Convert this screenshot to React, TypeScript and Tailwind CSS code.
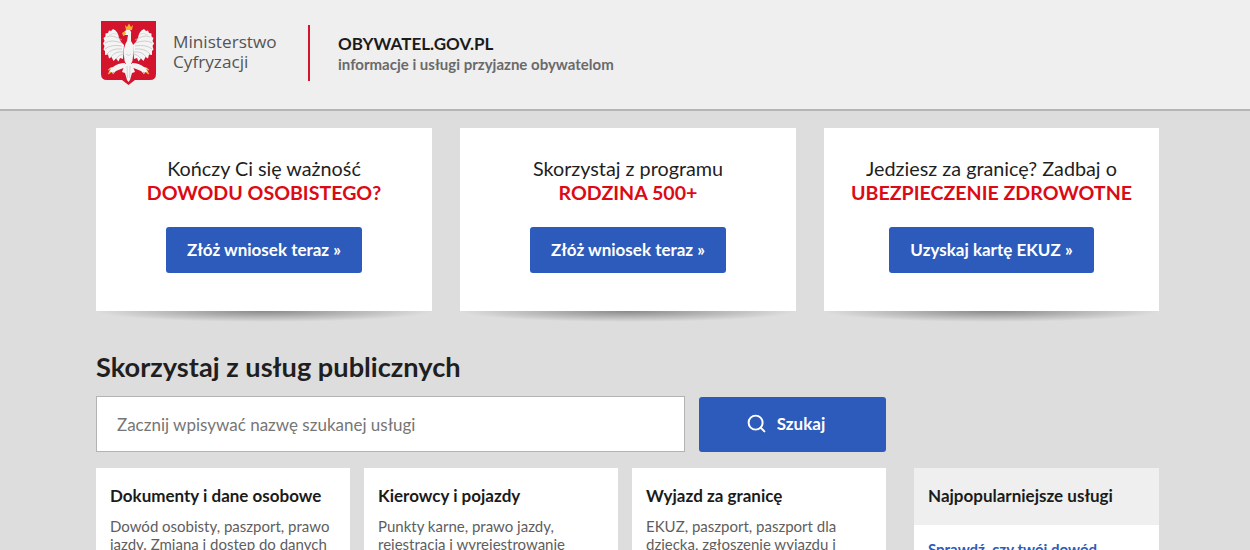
import { Search } from "lucide-react";

const promos = [
  { line: "Kończy Ci się ważność", red: "DOWODU OSOBISTEGO?", cta: "Złóż wniosek teraz »" },
  { line: "Skorzystaj z programu", red: "RODZINA 500+", cta: "Złóż wniosek teraz »" },
  { line: "Jedziesz za granicę? Zadbaj o", red: "UBEZPIECZENIE ZDROWOTNE", cta: "Uzyskaj kartę EKUZ »" },
];

const services = [
  { title: "Dokumenty i dane osobowe", text: "Dowód osobisty, paszport, prawo jazdy. Zmiana i dostęp do danych" },
  { title: "Kierowcy i pojazdy", text: "Punkty karne, prawo jazdy, rejestracja i wyrejestrowanie" },
  { title: "Wyjazd za granicę", text: "EKUZ, paszport, paszport dla dziecka, zgłoszenie wyjazdu i" },
];

// one wing, drawn for the left side and mirrored for the right
function Wing() {
  const feathers = [
    "M21 20Q11 14 6 17",
    "M21 23Q10 19 4 23",
    "M21 26Q10 24 4 29",
    "M21 29Q11 28 6 34",
    "M22 32Q14 31 10 37",
    "M23 34Q18 34 15 39",
  ];
  return (
    <g>
      <path
        d="M23 25Q20 23 18 18Q17 11 12 9L10 11L8 10.5L7 13L4.500 13.500L4.500 16.500L2.500 18L3.500 21L2 23.500L3.500 26L2.500 29.500L4 31L4 35L7 34.500L8 38.500L10.500 37L12.500 41L15 38.500L17.500 41.500L19 38L22 39Z"
        fill="#f4f4f4"
      />
      {feathers.map((d) => (
        <path key={d} d={d} fill="none" stroke="#bdbdbd" strokeWidth="0.7" />
      ))}
      <path d="M17 14Q12 12.500 8 15" fill="none" stroke="#cfcfcf" strokeWidth="0.6" />
      {/* leg and talons */}
      <path d="M24 43Q17 43 12 47Q9 47 7 50L9 50L7 54L11 52L12 54L15 51Q20 49 25 47Z" fill="#f4f4f4" />
      <path d="M7 50L10 49M7 54L10 52M12 54L13 52" stroke="#e3a82e" strokeWidth="1.2" />
    </g>
  );
}

// Godło — eagle on the red shield
function Emblem() {
  return (
    <svg viewBox="0 0 56 66" className="h-[66px] w-[56px] shrink-0">
      <path d="M0 1H55V54Q55 60 49 60H34L27.500 65L21 60H6Q0 60 0 54Z" fill="#d4132d" />
      <Wing />
      <g transform="translate(55 0) scale(-1 1)">
        <Wing />
      </g>
      {/* neck and body */}
      <path
        d="M24 11Q26 9 29 10Q31 12 30 15L30 21Q34 26 32 36Q32 41 30 44H25Q23 41 23 36Q22 27 26 21L27 15L24 15L22 16Z"
        fill="#f4f4f4"
      />
      {/* tail */}
      <path d="M24 44H31L34 52L31 53L29 60L27.500 62L26 60L24 53L21 52Z" fill="#f4f4f4" />
      <path d="M26 46L26.500 58M29 46L28.500 58M25 34Q27.500 37 30 34" fill="none" stroke="#bdbdbd" strokeWidth="0.6" />
      {/* crown and beak */}
      <path d="M24 5L26 7L28 3.500L30 7L32 5L31 10H25Z" fill="#f0b429" />
      <path d="M24 11L21 13L22 15.500L25 14Z" fill="#f0b429" />
    </svg>
  );
}

function PromoCard({ line, red, cta }: { line: string; red: string; cta: string }) {
  return (
    <div className="relative h-[183px]">
      {/* soft shadow under the card */}
      <div className="absolute inset-x-0 top-full h-[11px] bg-[radial-gradient(ellipse_50%_100%_at_50%_0%,rgba(0,0,0,0.38),rgba(0,0,0,0)_100%)]" />
      <div className="relative flex h-full flex-col items-center bg-white pt-[28px]">
        <p className="text-[19.8px] leading-[24px] text-[#1f1f1f]">{line}</p>
        <p className="mt-[1px] text-[19.6px] font-bold leading-[24px] text-[#dc0a14]">{red}</p>
        <button className="mt-[22px] h-[46px] rounded-[3px] bg-[#2c5bbb] px-[21px] text-[17px] font-bold text-white">
          {cta}
        </button>
      </div>
    </div>
  );
}

function ServiceCard({ title, text }: { title: string; text: string }) {
  return (
    <div className="h-[200px] bg-white px-[14px] pt-[16px]">
      <h3 className="text-[17px] font-bold leading-[24px] text-[#1b1b1b]">{title}</h3>
      <p className="mt-[9px] text-[15px] leading-[18px] text-[#5e5e5e]">{text}</p>
    </div>
  );
}

export default function App() {
  return (
    <div className="h-[550px] overflow-hidden bg-[#dddddd] font-['Lato',sans-serif]">
      <header className="h-[111px] border-b-2 border-[#b5b5b5] bg-[#efefef] pl-[101px] pt-[20px]">
        <div className="flex items-start">
          <Emblem />
          <div className="ml-[16px] mt-[12px] w-[135px] font-['Open_Sans',sans-serif] text-[17.2px] leading-[20px] text-[#555555]">
            <div>Ministerstwo</div>
            <div>Cyfryzacji</div>
          </div>
          <div className="mt-[5px] h-[56px] w-[2px] bg-[#d4132d]" />
          <div className="ml-[28px] mt-[14px]">
            <div className="text-[17px] font-bold leading-[20px] text-[#1b1b1b]">OBYWATEL.GOV.PL</div>
            <div className="text-[15px] font-bold leading-[20px] text-[#6a6a6a]">
              informacje i usługi przyjazne obywatelom
            </div>
          </div>
        </div>
      </header>

      <main className="pl-[96px] pt-[17px]">
        <div className="grid w-[1063px] grid-cols-[336px_336px_335px] gap-[28px]">
          {promos.map((p) => (
            <PromoCard key={p.red} {...p} />
          ))}
        </div>

        <h2 className="mt-[37px] text-[27.2px] font-bold leading-[38px] text-[#1f1f1f]">Skorzystaj z usług publicznych</h2>

        <div className="mt-[10px] flex gap-[14px]">
          <div className="flex h-[56px] w-[589px] items-center border border-[#b3b3b3] bg-white px-[20px] pt-[2px] text-[17px] text-[#767676]">
            Zacznij wpisywać nazwę szukanej usługi
          </div>
          <button className="mt-[1px] flex h-[55px] w-[187px] items-center justify-center gap-[10px] rounded-[3px] bg-[#2c5bbb] pb-[2px] pr-[14px] text-[17px] font-bold text-white">
            <Search size={21} strokeWidth={2.25} />
            Szukaj
          </button>
        </div>

        <div className="mt-[16px] flex">
          <div className="grid w-[790px] grid-cols-3 gap-[14px]">
            {services.map((s) => (
              <ServiceCard key={s.title} {...s} />
            ))}
          </div>
          <aside className="ml-[28px] w-[245px] bg-white">
            <div className="h-[57px] bg-[#efefef] px-[14px] pt-[16px] text-[17px] font-bold leading-[24px] text-[#1b1b1b]">
              Najpopularniejsze usługi
            </div>
            <a className="mt-[14px] block px-[14px] text-[15px] font-bold leading-[20px] text-[#2c5bbb]">
              Sprawdź, czy twój dowód
            </a>
          </aside>
        </div>
      </main>
    </div>
  );
}
